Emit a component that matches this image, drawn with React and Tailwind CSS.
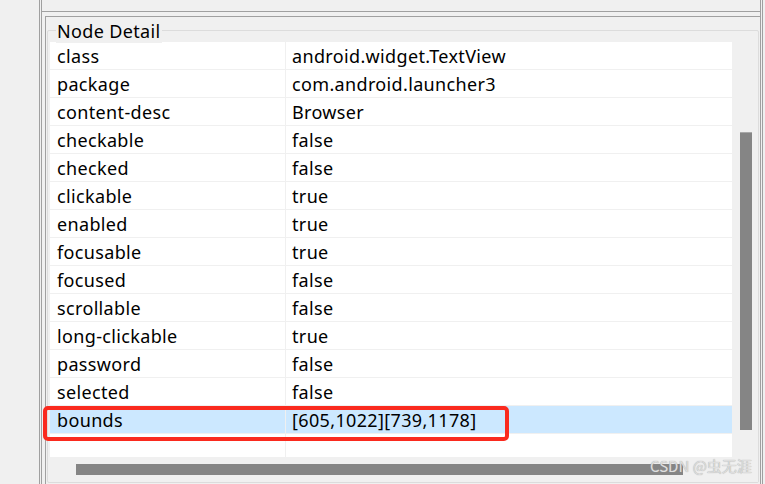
const rows = [
  ['class', 'android.widget.TextView'],
  ['package', 'com.android.launcher3'],
  ['content-desc', 'Browser'],
  ['checkable', 'false'],
  ['checked', 'false'],
  ['clickable', 'true'],
  ['enabled', 'true'],
  ['focusable', 'true'],
  ['focused', 'false'],
  ['scrollable', 'false'],
  ['long-clickable', 'true'],
  ['password', 'false'],
  ['selected', 'false'],
  ['bounds', '[605,1022][739,1178]'],
];

function Row({ name, value, selected }) {
  return (
    <div className={`flex h-[28px] border-b border-[#f0f0f0] ${selected ? 'bg-[#cce8ff]' : ''}`}>
      <div className="w-[236px] shrink-0 border-r border-[#f0f0f0] pl-[7px] pt-px leading-[26px]">{name}</div>
      <div className="pl-[6px] pt-px leading-[26px] whitespace-nowrap">{value}</div>
    </div>
  );
}

export default function App() {
  return (
    <div className="relative flex w-[765px] h-[484px] overflow-hidden bg-[#f0f0f0] text-[18px] tracking-[0.35px] text-black font-['Noto_Sans','Noto_Sans_CJK_SC',sans-serif]">
      <div className="w-[39px] shrink-0" />
      <div className="flex flex-1 flex-col mr-[2px] border-x-[3px] border-double border-[#a0a0a0]">
        {/* top panel */}
        <div className="h-[12px] shrink-0 border-b border-[#a0a0a0]" />

        {/* detail panel */}
        <div className="flex flex-1 flex-col mt-[4px] ml-[3px] border-t border-l border-[#a0a0a0]">
          <div className="relative flex-1 mt-[13px] mx-[1px] mb-[1px] border border-[#dcdcdc] rounded-[2px]">
            <span className="absolute -top-[12px] left-[8px] px-[1px] bg-[#f0f0f0] leading-[24px]">
              Node Detail
            </span>

            <div className="grid grid-cols-[682px_26px] grid-rows-[415px_25px] ml-[2px] mt-[11px]">
              <div className="bg-white overflow-hidden flex flex-col">
                {rows.map(([name, value]) => (
                  <Row key={name} name={name} value={value} selected={name === 'bounds'} />
                ))}
                <div className="flex flex-1">
                  <div className="w-[236px] shrink-0 border-r border-[#f0f0f0]" />
                </div>
              </div>

              {/* vertical scrollbar */}
              <div className="bg-[#f0f0f0]">
                <div className="ml-[8px] mt-[90px] w-[12px] h-[298px] bg-[#858585] border-t border-[#a8a8a8]" />
              </div>

              {/* horizontal scrollbar */}
              <div className="bg-[#f0f0f0]">
                <div className="ml-[26px] mt-[7px] w-[607px] h-[11px] bg-[#858585]" />
              </div>
              <div className="bg-[#f0f0f0]" />
            </div>
          </div>
        </div>
      </div>

      {/* annotation */}
      <div className="absolute left-[43px] top-[406px] w-[466px] h-[35px] border-4 border-[#fa2a1e] rounded-[5px]" />

      <div className="absolute left-[650px] top-[456px] text-[15px] leading-[20px] tracking-normal text-[#dedede] [text-shadow:0_0_1px_#9a9a9a] font-['Noto_Sans_CJK_SC',sans-serif]">
        CSDN @虫无涯
      </div>
    </div>
  );
}
